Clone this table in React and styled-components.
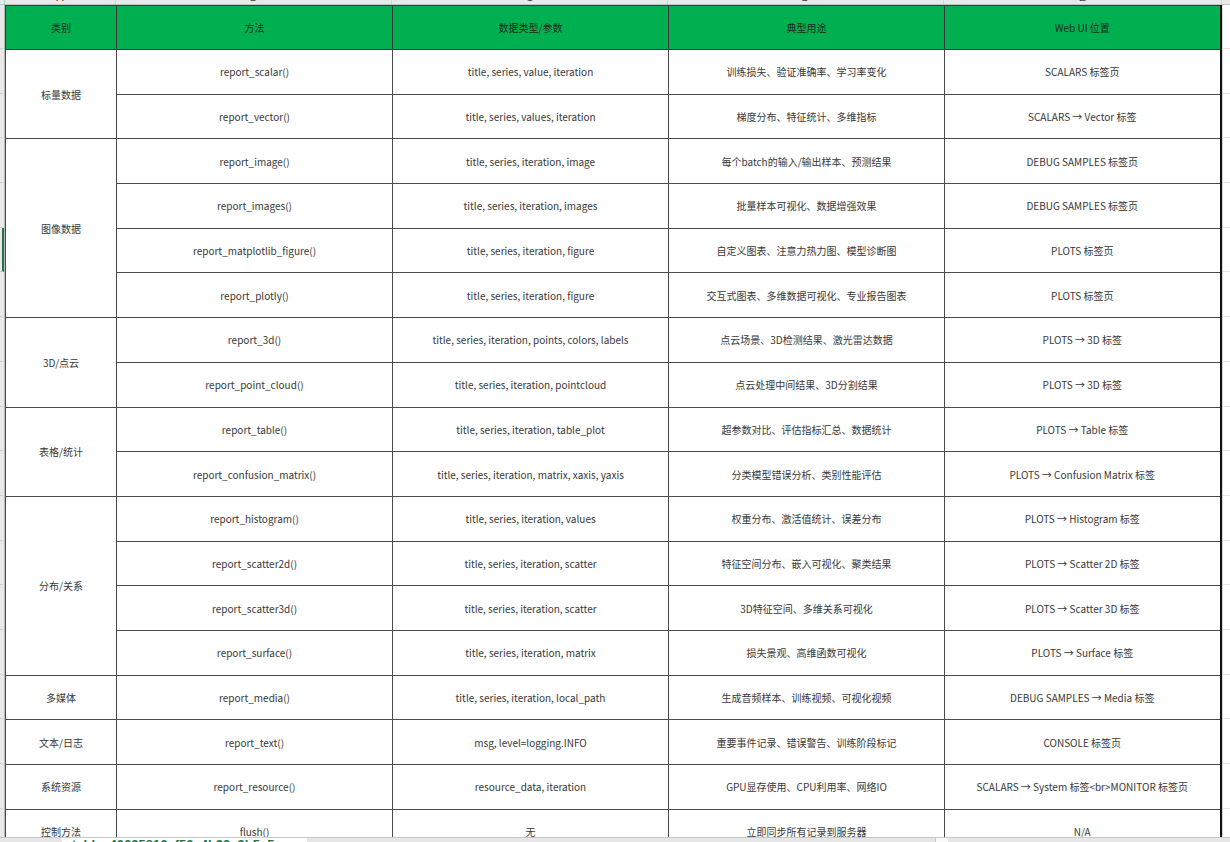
import React from 'react'
import styled, { createGlobalStyle } from 'styled-components'

const GlobalStyle = createGlobalStyle`
  html, body {
    margin: 0;
    padding: 0;
    background: #fff;
    overflow: hidden;
  }
  body {
    font-family: "Noto Sans CJK SC", "Liberation Sans", sans-serif;
  }
`

const COLS = [111, 276, 276, 276, 276]
const LETTERS = ['A', 'B', 'C', 'D', 'E']
// row pitch as it shows on screen; cells take one pixel less for the border
const HEAD_H = 44
const ROW_H = 44.7

const groups = [
  {
    name: '标量数据',
    rows: [
      ['report_scalar()', 'title, series, value, iteration', '训练损失、验证准确率、学习率变化', 'SCALARS 标签页'],
      ['report_vector()', 'title, series, values, iteration', '梯度分布、特征统计、多维指标', 'SCALARS → Vector 标签'],
    ],
  },
  {
    name: '图像数据',
    rows: [
      ['report_image()', 'title, series, iteration, image', '每个batch的输入/输出样本、预测结果', 'DEBUG SAMPLES 标签页'],
      ['report_images()', 'title, series, iteration, images', '批量样本可视化、数据增强效果', 'DEBUG SAMPLES 标签页'],
      ['report_matplotlib_figure()', 'title, series, iteration, figure', '自定义图表、注意力热力图、模型诊断图', 'PLOTS 标签页'],
      ['report_plotly()', 'title, series, iteration, figure', '交互式图表、多维数据可视化、专业报告图表', 'PLOTS 标签页'],
    ],
  },
  {
    name: '3D/点云',
    rows: [
      ['report_3d()', 'title, series, iteration, points, colors, labels', '点云场景、3D检测结果、激光雷达数据', 'PLOTS → 3D 标签'],
      ['report_point_cloud()', 'title, series, iteration, pointcloud', '点云处理中间结果、3D分割结果', 'PLOTS → 3D 标签'],
    ],
  },
  {
    name: '表格/统计',
    rows: [
      ['report_table()', 'title, series, iteration, table_plot', '超参数对比、评估指标汇总、数据统计', 'PLOTS → Table 标签'],
      ['report_confusion_matrix()', 'title, series, iteration, matrix, xaxis, yaxis', '分类模型错误分析、类别性能评估', 'PLOTS → Confusion Matrix 标签'],
    ],
  },
  {
    name: '分布/关系',
    rows: [
      ['report_histogram()', 'title, series, iteration, values', '权重分布、激活值统计、误差分布', 'PLOTS → Histogram 标签'],
      ['report_scatter2d()', 'title, series, iteration, scatter', '特征空间分布、嵌入可视化、聚类结果', 'PLOTS → Scatter 2D 标签'],
      ['report_scatter3d()', 'title, series, iteration, scatter', '3D特征空间、多维关系可视化', 'PLOTS → Scatter 3D 标签'],
      ['report_surface()', 'title, series, iteration, matrix', '损失景观、高维函数可视化', 'PLOTS → Surface 标签'],
    ],
  },
  {
    name: '多媒体',
    rows: [['report_media()', 'title, series, iteration, local_path', '生成音频样本、训练视频、可视化视频', 'DEBUG SAMPLES → Media 标签']],
  },
  {
    name: '文本/日志',
    rows: [['report_text()', 'msg, level=logging.INFO', '重要事件记录、错误警告、训练阶段标记', 'CONSOLE 标签页']],
  },
  {
    name: '系统资源',
    rows: [['report_resource()', 'resource_data, iteration', 'GPU显存使用、CPU利用率、网络IO', 'SCALARS → System 标签<br>MONITOR 标签页']],
  },
  {
    name: '控制方法',
    rows: [['flush()', '无', '立即同步所有记录到服务器', 'N/A']],
  },
]

const totalRows = groups.reduce((n, g) => n + g.rows.length, 0)
const SELECTED_ROW = 4

const Window = styled.div`
  width: 1230px;
  height: 842px;
  display: flex;
  flex-direction: column;
  overflow: hidden;
  background: #fff;
`

const ColBar = styled.div`
  height: 5px;
  flex: none;
  display: flex;
  background: #e9e9e9;
  border-bottom: 1px solid #c4c4c4;
  box-sizing: border-box;
  overflow: hidden;
`

const Corner = styled.div`
  width: 5px;
  flex: none;
  border-right: 1px solid #c4c4c4;
  box-sizing: border-box;
`

const ColLetter = styled.div`
  flex: none;
  width: ${p => p.$w}px;
  border-right: 1px solid #d0d0d0;
  box-sizing: border-box;
  text-align: center;
  font-family: "Liberation Sans", sans-serif;
  font-size: 11px;
  line-height: 12px;
  color: #444;
  margin-top: -9px;
`

const Main = styled.div`
  flex: 1;
  display: flex;
  overflow: hidden;
`

const RowBar = styled.div`
  width: 5px;
  flex: none;
  background: #e9e9e9;
  border-right: 1px solid #b8b8b8;
  box-sizing: border-box;
  display: flex;
  flex-direction: column;
`

const RowMark = styled.div`
  flex: none;
  height: ${p => p.$h}px;
  box-sizing: border-box;
  border-bottom: 1px solid #cfcfcf;
  border-right: 2px solid ${p => (p.$sel ? '#217346' : 'transparent')};
`

const Sheet = styled.table`
  flex: none;
  table-layout: fixed;
  border-collapse: collapse;
  width: ${COLS.reduce((a, b) => a + b, 0)}px;
  border-right: 2px solid #111;
`

const HeadCell = styled.th`
  height: ${HEAD_H - 1}px;
  padding: 0;
  background: #00b050;
  border: 1px solid #3a3a3a;
  font-size: 10px;
  font-weight: 400;
  color: #1c2b20;
  text-align: center;
  vertical-align: middle;
`

const Cell = styled.td`
  height: ${ROW_H - 1}px;
  padding: 0 4px;
  border: 1px solid #4a4a4a;
  font-size: 10px;
  color: #383838;
  text-align: center;
  vertical-align: middle;
  white-space: nowrap;
  overflow: hidden;
`

const Filler = styled.div`
  flex: 1;
  display: flex;
  flex-direction: column;
  border-left: 1px solid #d6d6d6;
`

const FillerLine = styled.div`
  flex: none;
  height: ${p => p.$h}px;
  box-sizing: border-box;
  border-bottom: 1px solid #e3e3e3;
`

const TabBar = styled.div`
  height: 5px;
  flex: none;
  display: flex;
  background: #e6e6e6;
  border-top: 1px solid #c8c8c8;
  box-sizing: border-box;
  overflow: hidden;
`

const TabSpacer = styled.div`
  width: ${p => p.$w}px;
  flex: none;
`

const SheetTab = styled.div`
  width: 245px;
  flex: none;
  background: #fff;
  padding-left: 10px;
  box-sizing: border-box;
  font-family: "Liberation Sans", sans-serif;
  font-size: 13px;
  font-weight: 700;
  line-height: 14px;
  color: #217346;
  white-space: nowrap;
  overflow: hidden;
`

const ScrollBox = styled.div`
  width: 12px;
  flex: none;
  margin-left: auto;
  margin-right: 282px;
  background: #fafafa;
  border-left: 1px solid #c8c8c8;
`

export default function App() {
  const rowHeights = [HEAD_H, ...Array(totalRows + 1).fill(ROW_H)]
  let idx = -1
  return (
    <Window>
      <GlobalStyle />
      <ColBar>
        <Corner />
        {COLS.map((w, i) => (
          <ColLetter key={i} $w={i === COLS.length - 1 ? w + 2 : w}>{LETTERS[i]}</ColLetter>
        ))}
      </ColBar>
      <Main>
        <RowBar>
          {rowHeights.map((h, i) => (
            <RowMark key={i} $h={h} $sel={i - 1 === SELECTED_ROW} />
          ))}
        </RowBar>
        <div>
          <Sheet>
            <colgroup>
              {COLS.map((w, i) => <col key={i} style={{ width: w }} />)}
            </colgroup>
            <thead>
              <tr>
                <HeadCell>类别</HeadCell>
                <HeadCell>方法</HeadCell>
                <HeadCell>数据类型/参数</HeadCell>
                <HeadCell>典型用途</HeadCell>
                <HeadCell>Web UI 位置</HeadCell>
              </tr>
            </thead>
            <tbody>
              {groups.map(g =>
                g.rows.map((r, j) => {
                  idx += 1
                  return (
                    <tr key={idx}>
                      {j === 0 && <Cell rowSpan={g.rows.length}>{g.name}</Cell>}
                      {r.map((c, k) => <Cell key={k}>{c}</Cell>)}
                    </tr>
                  )
                })
              )}
            </tbody>
          </Sheet>
        </div>
        <Filler>
          {rowHeights.map((h, i) => <FillerLine key={i} $h={h} />)}
        </Filler>
      </Main>
      <TabBar>
        <TabSpacer $w={62} />
        <SheetTab>table_40625816_f50e4b23c9b5e5</SheetTab>
        <ScrollBox />
      </TabBar>
    </Window>
  )
}
